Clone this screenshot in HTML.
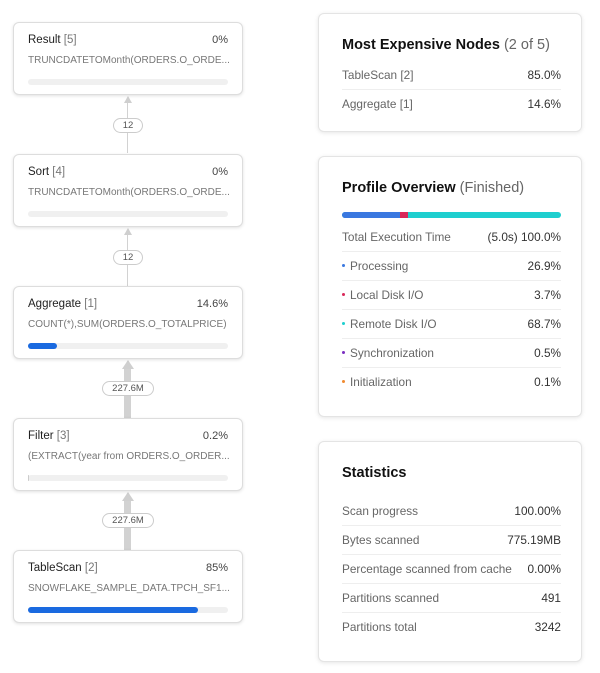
<!DOCTYPE html>
<html><head><style>
*{margin:0;padding:0;box-sizing:border-box}
body{width:600px;height:673px;background:#fff;font-family:"Liberation Sans",sans-serif;position:relative;overflow:hidden;color:#222}
.node{position:absolute;left:13px;width:230px;height:73px;border:1px solid #ddd;border-radius:6px;background:#fff;box-shadow:0 1px 3px rgba(0,0,0,.12)}
.node .t{position:absolute;left:14px;top:11px;font-size:11.5px;color:#222}
.node .t span{color:#777}
.node .p{position:absolute;right:14px;top:11px;font-size:11px;color:#444}
.node .d{position:absolute;left:14px;top:32px;font-size:10px;color:#777;white-space:nowrap}
.node .b{position:absolute;left:14px;right:14px;top:56px;height:6px;border-radius:3px;background:#f0f0f0}
.node .b i{position:absolute;left:0;top:0;bottom:0;border-radius:3px;background:#1a6ae0}
.line{position:absolute;background:#d2d2d2}
.arr{position:absolute;width:0;height:0;border-left:4px solid transparent;border-right:4px solid transparent;border-bottom:7px solid #cfcfcf}
.pill{position:absolute;height:15px;border:1px solid #ccc;border-radius:8px;background:#fff;font-size:9.5px;color:#555;text-align:center;line-height:13px}
.panel{position:absolute;left:318px;width:264px;border:1px solid #e4e4e4;border-radius:6px;background:#fff;box-shadow:0 1px 4px rgba(0,0,0,.1)}
.h{position:absolute;left:23px;font-size:14.5px;font-weight:bold;color:#111}
.h span{font-weight:normal;color:#666}
.row{position:absolute;left:23px;width:219px;height:29px;font-size:11.8px;color:#666;line-height:29px}
.row b{position:absolute;right:0;top:0;font-weight:normal;color:#333}
.row.s{border-bottom:1px solid #eee}
.dot{display:inline-block;width:3px;height:3px;border-radius:50%;margin-right:5px;vertical-align:middle;position:relative;top:-1px}
</style></head><body>

<div class="line" style="left:127px;top:100px;width:1px;height:53px"></div>
<div class="arr" style="left:124px;top:96px"></div>
<div class="pill" style="left:113px;top:118px;width:30px">12</div>

<div class="line" style="left:127px;top:232px;width:1px;height:54px"></div>
<div class="arr" style="left:124px;top:228px"></div>
<div class="pill" style="left:113px;top:250px;width:30px">12</div>

<div class="line" style="left:124px;top:367px;width:7px;height:51px"></div>
<div class="arr" style="left:122px;top:360px;border-left-width:6px;border-right-width:6px;border-bottom-width:9px"></div>
<div class="pill" style="left:102px;top:381px;width:52px">227.6M</div>

<div class="line" style="left:124px;top:499px;width:7px;height:51px"></div>
<div class="arr" style="left:122px;top:492px;border-left-width:6px;border-right-width:6px;border-bottom-width:9px"></div>
<div class="pill" style="left:102px;top:513px;width:52px">227.6M</div>

<div class="node" style="top:22px"><div class="t">Result <span>[5]</span></div><div class="p">0%</div><div class="d">TRUNCDATETOMonth(ORDERS.O_ORDE...</div><div class="b"></div></div>
<div class="node" style="top:154px"><div class="t">Sort <span>[4]</span></div><div class="p">0%</div><div class="d">TRUNCDATETOMonth(ORDERS.O_ORDE...</div><div class="b"></div></div>
<div class="node" style="top:286px"><div class="t">Aggregate <span>[1]</span></div><div class="p">14.6%</div><div class="d">COUNT(*),SUM(ORDERS.O_TOTALPRICE)</div><div class="b"><i style="width:29px"></i></div></div>
<div class="node" style="top:418px"><div class="t">Filter <span>[3]</span></div><div class="p">0.2%</div><div class="d">(EXTRACT(year from ORDERS.O_ORDER...</div><div class="b"><i style="width:1px;background:#ccc"></i></div></div>
<div class="node" style="top:550px"><div class="t">TableScan <span>[2]</span></div><div class="p">85%</div><div class="d">SNOWFLAKE_SAMPLE_DATA.TPCH_SF1...</div><div class="b"><i style="width:170px"></i></div></div>

<div class="panel" style="top:13px;height:119px">
<div class="h" style="top:23px">Most Expensive Nodes <span>(2 of 5)</span></div>
<div class="row s" style="top:47px">TableScan [2]<b>85.0%</b></div>
<div class="row" style="top:76px">Aggregate [1]<b>14.6%</b></div>
</div>

<div class="panel" style="top:156px;height:261px">
<div class="h" style="top:23px">Profile Overview <span>(Finished)</span></div>
<div style="position:absolute;left:23px;top:55px;width:219px;height:6px;border-radius:3px;background:#1ecfcf;overflow:hidden"><div style="position:absolute;left:0;top:0;bottom:0;width:58px;background:#3a78e0"></div><div style="position:absolute;left:58px;top:0;bottom:0;width:8px;background:#d8285a"></div></div>
<div class="row s" style="top:66px">Total Execution Time<b>(5.0s) 100.0%</b></div>
<div class="row s" style="top:95px"><span class="dot" style="background:#3a78e0"></span>Processing<b>26.9%</b></div>
<div class="row s" style="top:124px"><span class="dot" style="background:#d8285a"></span>Local Disk I/O<b>3.7%</b></div>
<div class="row s" style="top:153px"><span class="dot" style="background:#1ecfcf"></span>Remote Disk I/O<b>68.7%</b></div>
<div class="row s" style="top:182px"><span class="dot" style="background:#7a2fc0"></span>Synchronization<b>0.5%</b></div>
<div class="row" style="top:211px"><span class="dot" style="background:#f08a30"></span>Initialization<b>0.1%</b></div>
</div>

<div class="panel" style="top:441px;height:221px">
<div class="h" style="top:23px">Statistics</div>
<div class="row s" style="top:55px">Scan progress<b>100.00%</b></div>
<div class="row s" style="top:84px">Bytes scanned<b>775.19MB</b></div>
<div class="row s" style="top:113px">Percentage scanned from cache<b>0.00%</b></div>
<div class="row s" style="top:142px">Partitions scanned<b>491</b></div>
<div class="row" style="top:171px">Partitions total<b>3242</b></div>
</div>
</body></html>
